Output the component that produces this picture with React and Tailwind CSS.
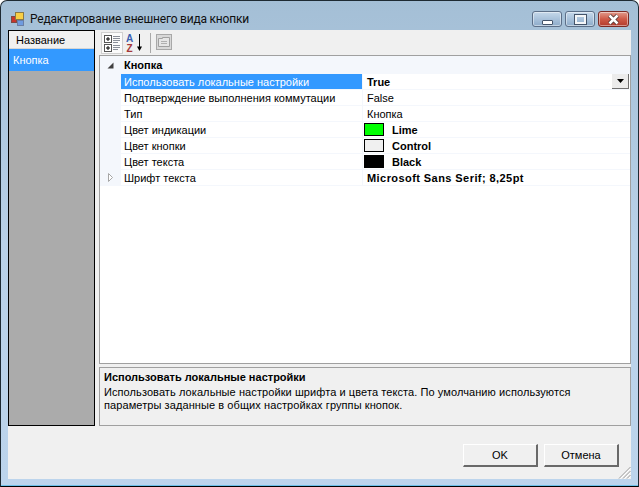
const rows = [
  { label: 'Использовать локальные настройки', value: 'True', bold: true, selected: true },
  { label: 'Подтверждение выполнения коммутации', value: 'False' },
  { label: 'Тип', value: 'Кнопка' },
  { label: 'Цвет индикации', value: 'Lime', bold: true, swatch: 'bg-[#00ff00]' },
  { label: 'Цвет кнопки', value: 'Control', bold: true, swatch: 'bg-[#f0f0f0]' },
  { label: 'Цвет текста', value: 'Black', bold: true, swatch: 'bg-black' },
  { label: 'Шрифт текста', value: 'Microsoft Sans Serif; 8,25pt', bold: true, expand: true, wide: true },
];

function AppIcon() {
  return (
    <svg width="16" height="16" viewBox="0 0 16 16" className="shrink-0">
      <rect x="1.5" y="5.5" width="5" height="6" fill="#c8352b" stroke="#7d4a45" />
      <rect x="5.5" y="1.5" width="8" height="7" fill="#f8cf45" stroke="#8b7a45" />
      <rect x="7.5" y="9.5" width="6" height="5" fill="#6f9be0" stroke="#6a7fa5" />
    </svg>
  );
}

function CategorizedIcon() {
  return (
    <svg width="18" height="18" viewBox="0 0 18 18">
      <rect x="1.5" y="1.5" width="7" height="7" fill="#fff" stroke="#555" />
      <rect x="1.5" y="10.5" width="7" height="7" fill="#fff" stroke="#555" />
      <path d="M3 5h4M5 3v4M3 14h4" stroke="#000" />
      <path d="M5 12v4" stroke="#000" />
      <path d="M10 2.5h7M10 4.5h7M10 6.5h7M10 8.5h5M10 11.5h7M10 13.5h7M10 15.5h5" stroke="#8a8f99" />
    </svg>
  );
}

function SortIcon() {
  return (
    <svg width="18" height="20" viewBox="0 0 18 20">
      <text x="0" y="9" fontSize="10" fontWeight="700" fill="#3a5fb0" fontFamily="Liberation Sans, sans-serif">A</text>
      <text x="0.5" y="19" fontSize="10" fontWeight="700" fill="#a5383a" fontFamily="Liberation Sans, sans-serif">Z</text>
      <path d="M13.5 1v14" stroke="#000" />
      <path d="M11 13.5h5L13.5 18z" fill="#000" />
    </svg>
  );
}

function PagesIcon() {
  return (
    <svg width="16" height="16" viewBox="0 0 16 16">
      <rect x="0.5" y="0.5" width="15" height="15" fill="#d8d8d8" stroke="#a8a8a8" />
      <path d="M2.5 4.5h4v-1h7v9h-11z" fill="#e6e6e6" stroke="#a0a0a0" />
      <path d="M5 7.5h6M5 9.5h6" stroke="#b0b0b0" />
    </svg>
  );
}

function WindowButton({ className, children, width = 'w-[30px]' }) {
  return (
    <div className={`${width} h-[16px] rounded-[3px] border border-[#5c6f88] flex items-center justify-center shadow-[inset_0_0_0_1px_rgba(255,255,255,0.45)] ${className}`}>
      {children}
    </div>
  );
}

function Row({ row }) {
  return (
    <div className="flex h-[16px] border-b border-[#f4f7fc]">
      <div className="w-[21px] shrink-0 bg-[#f4f7fc] flex items-center justify-center pr-[1px]">
        {row.expand ? (
          <svg width="7" height="9" viewBox="0 0 7 9">
            <path d="M1.5 0.5l4 4-4 4z" fill="#fff" stroke="#a6a6a6" />
          </svg>
        ) : null}
      </div>
      <div className={`w-[241px] shrink-0 pl-[3px] pt-[1px] leading-[14px] whitespace-nowrap overflow-hidden ${row.selected ? 'bg-[#3399ff] text-white' : ''}`}>
        {row.label}
      </div>
      <div className={`flex-1 flex items-center whitespace-nowrap border-l border-[#f4f7fc] ${row.bold ? 'font-bold' : ''} ${row.swatch ? 'pl-[1px]' : 'pl-[4px]'} ${row.wide ? 'tracking-[0.43px]' : ''}`}>
        {row.swatch ? (
          <span className={`w-[20px] h-[13px] border border-black mr-[8px] shrink-0 ${row.swatch}`} />
        ) : null}
        <span className="pt-[2px] leading-[13px]">{row.value}</span>
      </div>
      {row.selected ? (
        <div className="w-[17px] h-[15px] mr-[1px] shrink-0 bg-[#ececec] border-r border-b border-[#707070] flex items-center justify-center">
          <svg width="7" height="4" viewBox="0 0 7 4">
            <path d="M0 0h7L3.5 4z" fill="#000" />
          </svg>
        </div>
      ) : null}
    </div>
  );
}

export default function App() {
  return (
    <div className="relative w-[639px] h-[487px] flex flex-col overflow-hidden rounded-t-[7px] border border-[#1e2a33] border-b-black px-[7px] pb-[7px] shadow-[inset_0_-1px_0_#6cc0e8] bg-gradient-to-b from-[#a4bfd6] via-[#b9d1e8] to-[#bcd4ec] text-[11px] text-black font-['Liberation_Sans',sans-serif]">
      {/* title bar */}
      <header className="h-[29px] shrink-0 flex items-start">
        <div className="flex items-center gap-[4px] pl-[2px] pt-[10px]">
          <AppIcon />
          <span className="text-[12px] leading-[16px] tracking-[-0.2px] text-[#101010] font-['Roboto',sans-serif]">Редактирование внешнего вида кнопки</span>
        </div>
        <div className="ml-auto flex gap-[3px] pt-[10px] mr-[2px]">
          <WindowButton className="bg-gradient-to-b from-[#c5d8ea] via-[#a9c2db] to-[#8dabc9]">
            <span className="w-[11px] h-[5px] mt-[6px] rounded-[1px] bg-white border border-[#44546a]" />
          </WindowButton>
          <WindowButton className="bg-gradient-to-b from-[#c5d8ea] via-[#a9c2db] to-[#8dabc9]">
            <span className="w-[11px] h-[9px] bg-transparent border-2 border-[#f4f6f8] outline outline-1 outline-[#44546a]" />
          </WindowButton>
          <WindowButton width="w-[31px]" className="bg-gradient-to-b from-[#e09a8c] via-[#cf5a48] to-[#b23a2e] border-[#7c2a24]">
            <svg width="13" height="11" viewBox="0 0 13 11">
              <path d="M2.5 1.5l8 8M10.5 1.5l-8 8" stroke="#47302e" strokeWidth="4" />
              <path d="M2.5 1.5l8 8M10.5 1.5l-8 8" stroke="#fff" strokeWidth="2.5" />
            </svg>
          </WindowButton>
        </div>
      </header>

      {/* client area */}
      <div className="flex-1 flex flex-col bg-[#f0f0f0]">
        <div className="flex gap-[4px] h-[396px]">
          {/* list */}
          <div className="w-[87px] shrink-0 border border-black bg-[#ababab]">
            <div className="h-[18px] bg-[#f0f0f0] pl-[7px] leading-[19px] border-b border-[#d5d5d5]">Название</div>
            <div className="h-[22px] bg-[#3399ff] text-white pl-[4px] leading-[22px]">Кнопка</div>
          </div>

          {/* property grid */}
          <div className="flex-1 flex flex-col">
            <div className="h-[25px] shrink-0 flex items-start pt-[2px] pl-[2px]">
              <div className="w-[22px] h-[22px] flex items-center justify-center bg-[#fbfbfb] border border-[#d0d0d0]">
                <CategorizedIcon />
              </div>
              <div className="w-[20px] h-[22px] ml-[2px] flex items-center justify-center">
                <SortIcon />
              </div>
              <div className="w-px h-[20px] ml-[5px] mt-[1px] bg-[#a8a8a8]" />
              <div className="ml-[5px] mt-[2px]">
                <PagesIcon />
              </div>
            </div>
            <div className="h-[309px] shrink-0 bg-white border border-[#a0a0a0]">
              <div className="flex h-[18px] bg-[#f4f7fc] items-center">
                <div className="w-[21px] shrink-0 flex items-center justify-center">
                  <svg width="7" height="7" viewBox="0 0 7 7">
                    <path d="M6.5 0.5v6h-6z" fill="#404040" />
                  </svg>
                </div>
                <span className="pl-[3px] font-bold">Кнопка</span>
              </div>
              {rows.map((row) => (
                <Row key={row.label} row={row} />
              ))}
            </div>
            <div className="h-[59px] mt-[3px] shrink-0 border border-[#a0a0a0] px-[4px] pt-[3px] leading-[13px] whitespace-nowrap">
              <div className="font-bold">Использовать локальные настройки</div>
              <div className="mt-[2px] tracking-[0.085px]">Использовать локальные настройки шрифта и цвета текста. По умолчанию используются</div>
              <div className="tracking-[0.085px]">параметры заданные в общих настройках группы кнопок.</div>
            </div>
          </div>
        </div>

        {/* footer */}
        <div className="flex justify-end gap-[6px] pt-[18px] pr-[12px]">
          <button className="w-[75px] h-[23px] bg-[#f0f0f0] border-t border-l border-white border-r-2 border-b-2 border-r-[#696969] border-b-[#696969] leading-none">OK</button>
          <button className="w-[75px] h-[23px] bg-[#f0f0f0] border-t border-l border-white border-r-2 border-b-2 border-r-[#696969] border-b-[#696969] leading-none">Отмена</button>
        </div>
      </div>

      {/* resize grip */}
      <svg width="13" height="13" viewBox="0 0 13 13" className="absolute right-[7px] bottom-[7px]">
        <path d="M12.5 1L1 12.5M12.5 5L5 12.5M12.5 9L9 12.5" stroke="#9a9a9a" />
        <path d="M12.5 2.5L2.5 12.5M12.5 6.5L6.5 12.5M12.5 10.5L10.5 12.5" stroke="#ffffff" />
      </svg>
    </div>
  );
}
